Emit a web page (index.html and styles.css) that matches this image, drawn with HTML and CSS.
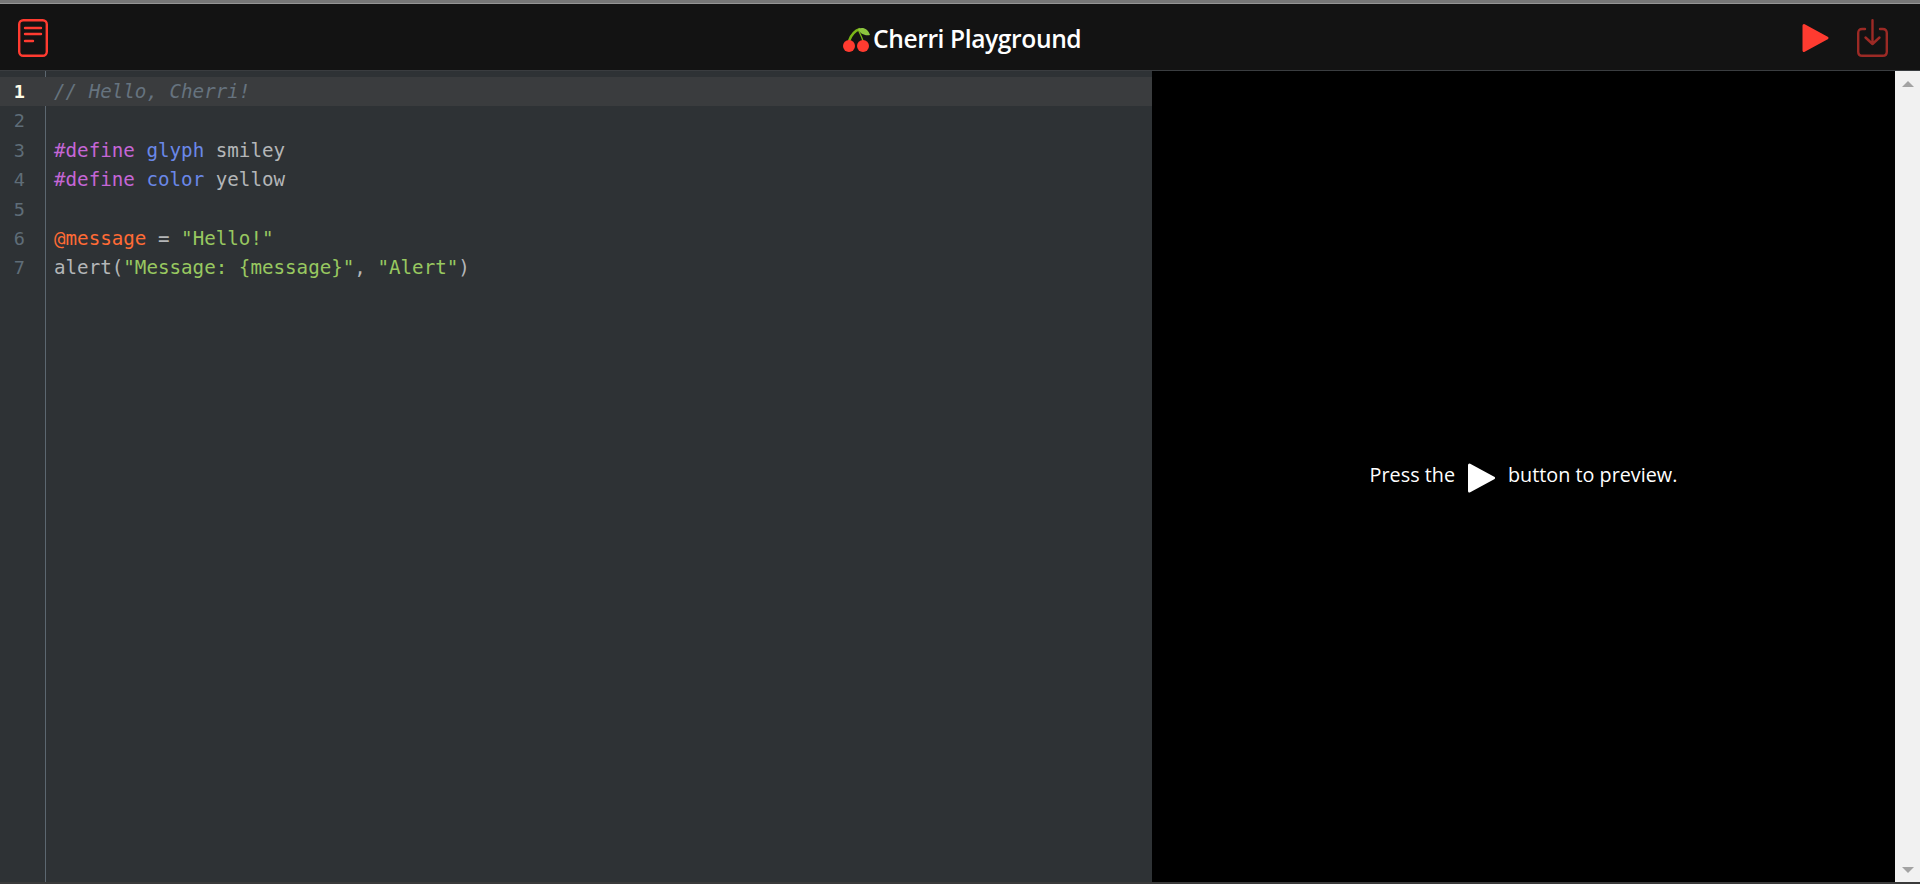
FILE: index.html
```html
<!DOCTYPE html>
<html lang="en">
<head>
<meta charset="utf-8">
<title>Cherri Playground</title>
<link rel="stylesheet" href="styles.css">
</head>
<body>
<div class="app">
  <header class="topbar">
    <button class="icon-btn" aria-label="Documentation">
      <svg width="32" height="40" viewBox="0 0 32 40" fill="none" stroke="#ff3b30" stroke-width="2.4" stroke-linecap="round"><rect x="1.200" y="3.200" width="27.600" height="35.600" rx="4"/><path d="M7 11H23M7 17H23M7 24H15"/></svg>
    </button>
    <h1 class="title">
      <svg class="cherry" width="27" height="26" viewBox="0 0 27 26"><path d="M6 14C8 8 11 4 17 2" fill="none" stroke="#7cb518" stroke-width="2.400"/><path d="M15.500 3C17 7 19 10 20 14" fill="none" stroke="#7cb518" stroke-width="1.300"/><path d="M15 2C20 -0.500 25 2 27 8C22 9 17 7 15 2Z" fill="#8cc63f"/><circle cx="6" cy="19" r="6" fill="#ff3b30"/><circle cx="20" cy="19" r="6" fill="#ff3b30"/></svg>
      <span>Cherri Playground</span>
    </h1>
    <div class="actions">
      <svg width="30" height="32" viewBox="0 -1 30 32"><path d="M3 3.500L26 16L3 28.500Z" fill="#ff3b30" stroke="#ff3b30" stroke-width="3" stroke-linejoin="round"/></svg>
      <svg width="32" height="40" viewBox="0 0 32 40" fill="none" stroke="#9c2a25" stroke-width="2.400" stroke-linecap="round" stroke-linejoin="round"><path d="M8 12H5.200Q1.200 12 1.200 16V34.800Q1.200 38.800 5.200 38.800H25.800Q29.800 38.800 29.800 34.800V16Q29.800 12 25.800 12H23M15.500 3.200V27M8.500 20.500L15.500 27L22.500 20.500"/></svg>
    </div>
  </header>
  <main class="workspace">
    <section class="editor">
      <div class="line active"><span class="num">1</span><span class="code comment">// Hello, Cherri!</span></div>
      <div class="line"><span class="num">2</span><span class="code"></span></div>
      <div class="line"><span class="num">3</span><span class="code"><span class="kw">#define</span> <span class="prop">glyph</span> smiley</span></div>
      <div class="line"><span class="num">4</span><span class="code"><span class="kw">#define</span> <span class="prop">color</span> yellow</span></div>
      <div class="line"><span class="num">5</span><span class="code"></span></div>
      <div class="line"><span class="num">6</span><span class="code"><span class="var">@message</span> = <span class="str">"Hello!"</span></span></div>
      <div class="line"><span class="num">7</span><span class="code">alert(<span class="str">"Message: {message}"</span>, <span class="str">"Alert"</span>)</span></div>
    </section>
    <section class="preview">
      <p class="hint"><span class="hint-text">Press the</span>
        <svg class="hint-play" width="27" height="30" viewBox="0 0 27 30"><path d="M1.500 2L25.500 15L1.500 28Z" fill="#fff" stroke="#fff" stroke-width="3" stroke-linejoin="round"/></svg>
        <span class="hint-text">button to preview.</span></p>
    </section>
    <aside class="scrollbar">
      <span class="arrow up"></span>
      <span class="arrow down"></span>
    </aside>
  </main>
</div>
</body>
</html>
```
FILE: styles.css
```css
* { box-sizing: border-box; }
html, body { margin: 0; height: 100%; background: #3a3a3a; overflow: hidden; }
.app { height: 882px; display: flex; flex-direction: column; border-top: 3px solid #777; }
.topbar { height: 68px; flex: none; background: #131313; border-top: 1px solid #969696; border-bottom: 1px solid #3a3d40; display: flex; align-items: center; justify-content: space-between; padding: 0 18px; position: relative; }
.icon-btn { background: none; border: 0; padding: 0; display: flex; }
.title { position: absolute; left: 843px; top: 17px; margin: 0; display: flex; align-items: center; gap: 3px; font: 600 24.6px/36px "Open Sans", sans-serif; color: #fff; letter-spacing: -0.4px; }
.cherry { margin-top: 2px; }
.actions { display: flex; align-items: center; gap: 26px; margin-right: 13px; }
.workspace { flex: 1; display: flex; min-height: 0; }
.editor { width: 1152px; flex: none; background: #2e3235; padding-top: 6px; font: 19.2px/29.4px "DejaVu Sans Mono", monospace; color: #b4b6b8; background-image: linear-gradient(#5c6770, #5c6770); background-size: 1px 100%; background-position: 45px 0; background-repeat: no-repeat; }
.line { display: flex; height: 29.4px; white-space: pre; }
.line.active { background: #3a3c3e; }
.num { width: 45px; padding-right: 20px; text-align: right; color: #5f6d78; flex: none; font-size: 18.5px; }
.active .num { color: #fffde8; font-weight: 700; }
.code { padding-left: 9px; }
.comment { color: #66737f; font-style: italic; }
.kw { color: #c566d6; }
.prop { color: #6a88e8; }
.var { color: #ff6b35; }
.str { color: #98c860; }
.preview { flex: 1; background: #000; display: flex; align-items: center; justify-content: center; }
.hint { margin: 0; display: flex; align-items: center; gap: 13px; color: #fff; font: 19.8px/32px "Open Sans", sans-serif; }
.hint-text { margin-bottom: 3px; }
.hint-play { margin-top: 2px; }
.scrollbar { width: 25px; flex: none; background: #f1f1f1; display: flex; flex-direction: column; justify-content: space-between; align-items: center; padding: 10px 0 9px; }
.arrow { width: 0; height: 0; border-left: 6px solid transparent; border-right: 6px solid transparent; }
.arrow.up { border-bottom: 6px solid #a3a3a3; }
.arrow.down { border-top: 6px solid #a3a3a3; }
```
